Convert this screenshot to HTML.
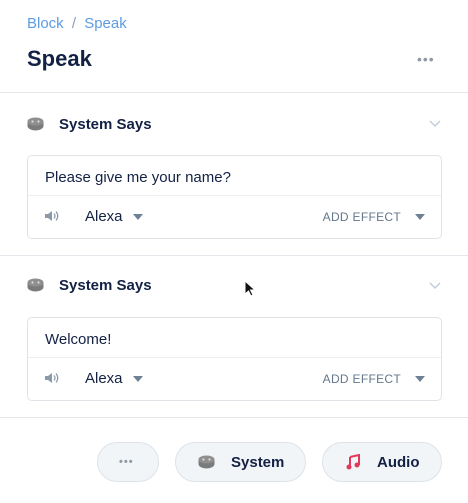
<!DOCTYPE html>
<html><head><style>
*{margin:0;padding:0;box-sizing:border-box}
body{width:468px;height:503px;background:#fff;font-family:"Liberation Sans",sans-serif;position:relative;overflow:hidden;color:#132144}
.a{position:absolute}
.hr{position:absolute;left:0;width:468px;height:1px;background:#e3e6ea}
.card{position:absolute;left:27px;width:415px;height:84px;border:1px solid #dfe3e8;border-radius:5px}
.card .t{position:absolute;left:17px;top:13px;font-size:15px;color:#132144}
.card .d{position:absolute;left:0;top:39px;width:100%;height:1px;background:#eceef1}
.card .al{position:absolute;left:57px;top:52px;font-size:15px;color:#132144}
.card .ef{position:absolute;right:40px;top:54px;font-size:12px;color:#62778c;letter-spacing:.3px}
.tri{position:absolute;width:0;height:0;border-left:5px solid transparent;border-right:5px solid transparent;border-top:6px solid #6e8194}
.hd{position:absolute;left:59px;font-size:15px;font-weight:600;color:#132144}
.btn{position:absolute;top:442px;height:40px;border:1px solid #dde3e9;border-radius:20px;background:#f2f5f7;font-size:15px;font-weight:600;color:#132144}
</style></head><body>
<div class="a" style="left:27px;top:15px;font-size:15px;color:#5d9be0">Block <span style="color:#8aa0b5;margin:0 4px">/</span> Speak</div>
<div class="a" style="left:27px;top:46px;font-size:22px;font-weight:bold;color:#132144">Speak</div>
<div class="a" style="left:417px;top:51px;font-size:14px;color:#8e9aa6;letter-spacing:1px">•••</div>
<div class="hr" style="top:92px"></div>

<svg class="a" style="left:27px;top:117px" width="17" height="14" viewBox="0 0 17 14"><ellipse cx="8.5" cy="9" rx="8" ry="4.5" fill="#7b7b7b"/><rect x="0.5" y="4.5" width="16" height="4.5" fill="#7b7b7b"/><ellipse cx="8.5" cy="4.5" rx="8" ry="4" fill="#8f8f8f"/><circle cx="5.5" cy="4.5" r="1.1" fill="#ddd"/><circle cx="11.5" cy="4.5" r="1.1" fill="#ddd"/></svg>
<div class="hd" style="top:116px">System Says</div>
<svg class="a" style="left:429px;top:120px" width="12" height="8"><path d="M1 1l5 5 5-5" stroke="#c5ced8" stroke-width="1.5" fill="none"/></svg>
<div class="card" style="top:155px">
<div class="t">Please give me your name?</div><div class="d"></div>
<svg class="a" style="left:16px;top:54px" width="16" height="12"><path d="M1 4h3l4-3v10l-4-3H1z" fill="#8a9aab"/><path d="M10 3.5q2 2.5 0 5M12 1.5q3.5 4.5 0 9" stroke="#8a9aab" stroke-width="1.2" fill="none"/></svg>
<div class="al">Alexa</div><div class="tri" style="left:105px;top:58px"></div>
<div class="ef">ADD EFFECT</div><div class="tri" style="right:16px;top:58px"></div>
</div>
<div class="hr" style="top:255px"></div>

<svg class="a" style="left:27px;top:278px" width="17" height="14" viewBox="0 0 17 14"><ellipse cx="8.5" cy="9" rx="8" ry="4.5" fill="#7b7b7b"/><rect x="0.5" y="4.5" width="16" height="4.5" fill="#7b7b7b"/><ellipse cx="8.5" cy="4.5" rx="8" ry="4" fill="#8f8f8f"/><circle cx="5.5" cy="4.5" r="1.1" fill="#ddd"/><circle cx="11.5" cy="4.5" r="1.1" fill="#ddd"/></svg>
<div class="hd" style="top:277px">System Says</div>
<svg class="a" style="left:429px;top:282px" width="12" height="8"><path d="M1 1l5 5 5-5" stroke="#c5ced8" stroke-width="1.5" fill="none"/></svg>
<div class="card" style="top:317px">
<div class="t">Welcome!</div><div class="d"></div>
<svg class="a" style="left:16px;top:54px" width="16" height="12"><path d="M1 4h3l4-3v10l-4-3H1z" fill="#8a9aab"/><path d="M10 3.5q2 2.5 0 5M12 1.5q3.5 4.5 0 9" stroke="#8a9aab" stroke-width="1.2" fill="none"/></svg>
<div class="al">Alexa</div><div class="tri" style="left:105px;top:58px"></div>
<div class="ef">ADD EFFECT</div><div class="tri" style="right:16px;top:58px"></div>
</div>
<div class="hr" style="top:417px"></div>

<svg class="a" style="left:244px;top:280px" width="12" height="18"><path d="M1 1v13l3.5-3 2.5 5 2-1-2.5-5h4.5z" fill="#111" stroke="#fff" stroke-width="1"/></svg>

<div class="btn" style="left:97px;width:62px"><span class="a" style="left:21px;top:13px;font-size:11px;color:#8e9aa6;letter-spacing:1px">•••</span></div>
<div class="btn" style="left:175px;width:131px">
<svg class="a" style="left:22px;top:12px" width="17" height="14" viewBox="0 0 17 14"><ellipse cx="8.5" cy="9" rx="8" ry="4.5" fill="#7b7b7b"/><rect x="0.5" y="4.5" width="16" height="4.5" fill="#7b7b7b"/><ellipse cx="8.5" cy="4.5" rx="8" ry="4" fill="#8f8f8f"/><circle cx="5.5" cy="4.5" r="1.1" fill="#ddd"/><circle cx="11.5" cy="4.5" r="1.1" fill="#ddd"/></svg>
<span class="a" style="left:55px;top:11px">System</span></div>
<div class="btn" style="left:322px;width:120px">
<svg class="a" style="left:23px;top:11px" width="14" height="16"><path d="M4 3l9-2v10" stroke="#e23a5a" stroke-width="2" fill="none"/><path d="M4 3v10" stroke="#e23a5a" stroke-width="2"/><circle cx="3" cy="13" r="2.5" fill="#e23a5a"/><circle cx="11" cy="11" r="2.5" fill="#e23a5a"/></svg>
<span class="a" style="left:54px;top:11px">Audio</span></div>
</body></html>
